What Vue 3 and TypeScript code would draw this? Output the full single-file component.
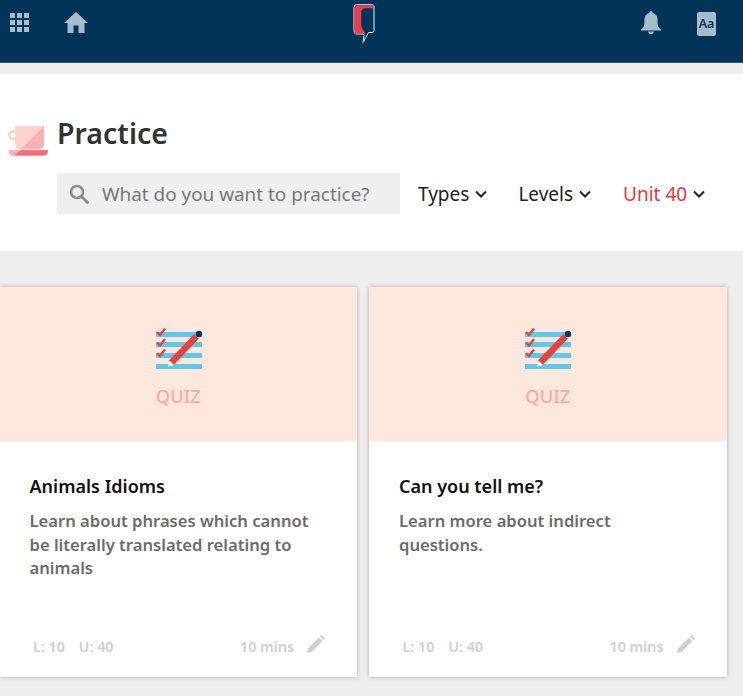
<script setup lang="ts">
interface Card {
  title: string;
  desc: string;
}

const cards: Card[] = [
  { title: 'Animals Idioms', desc: 'Learn about phrases which cannot be literally translated relating to animals' },
  { title: 'Can you tell me?', desc: 'Learn more about indirect questions.' },
];
const filters = ['Types', 'Levels', 'Unit 40'];
</script>

<template>
  <div class="page">
    <header class="topbar">
      <div class="left-icons">
        <svg class="grid-icon" width="20" height="20" viewBox="0 0 20 20">
          <g fill="#a9bbcb">
            <rect x="0" y="0" width="5" height="5" /><rect x="7" y="0" width="5" height="5" /><rect x="14" y="0" width="5" height="5" />
            <rect x="0" y="7" width="5" height="5" /><rect x="7" y="7" width="5" height="5" /><rect x="14" y="7" width="5" height="5" />
            <rect x="0" y="14" width="5" height="5" /><rect x="7" y="14" width="5" height="5" /><rect x="14" y="14" width="5" height="5" />
          </g>
        </svg>
        <svg class="home-icon" width="24" height="21" viewBox="0 0 24 21">
          <path d="M12 0 L24 11 H20.5 V21 H14.5 V13.5 H9.5 V21 H3.5 V11 H0 Z" fill="#a9bbcb" />
        </svg>
      </div>
      <svg class="logo" width="22" height="40" viewBox="0 0 22 40">
        <path d="M3.5 0.7 H19 Q21 0.7 21 2.7 V26.5 Q21 28.5 19 28.5 H15.5 L10 38.5 L11 31.5 Q11 30 9.5 30 H4 Q1 30 1 27 V3.5 Q1 0.7 3.5 0.7 Z" fill="#003459" stroke="#e8eef3" stroke-width="1" />
        <path d="M4 1.5 H20 V4.2 H12 Q8.2 4.6 8.2 9 V20 Q8.2 25 11 27 L12.5 29.4 H4.5 Q1.6 29.4 1.6 26.5 V4 Q1.6 1.5 4 1.5 Z" fill="#f23b4a" />
      </svg>
      <div class="right-icons">
        <svg width="20" height="23" viewBox="0 0 20 23">
          <path d="M10 0 Q11.7 0 11.8 2 Q16.6 3.3 16.6 9 V13 Q16.6 16 20 18.5 V19.5 H0 V18.5 Q3.4 16 3.4 13 V9 Q3.4 3.3 8.2 2 Q8.3 0 10 0 Z" fill="#a9bbcb" />
          <path d="M7 20.5 H13 Q12.5 23 10 23 Q7.5 23 7 20.5 Z" fill="#a9bbcb" />
        </svg>
        <div class="font-btn">Aa</div>
      </div>
    </header>

    <section class="head">
      <div class="title-row">
        <svg class="cup" width="40" height="30" viewBox="0 0 40 30">
          <path d="M7 0 H36 V17 Q36 23 30 23 H13 Q7 23 7 17 V14.5 H5.5 Q0 14.5 0 9.5 Q0 4 5.5 4 H7 Z M7 7 H5.5 Q3 7 3 9.5 Q3 11.5 5.5 11.5 H7 Z" fill="#ffd3d0" fill-rule="evenodd" />
          <path d="M36 0 V17 Q36 23 30 23 H13 Z" fill="#ffb0b5" />
          <path d="M0.5 24 H40 Q40 29.5 35 29.5 H5 Q0.5 29.5 0.5 24 Z" fill="#ffb0b5" />
          <path d="M6 29.5 L13 24 H40 Q40 29.5 35 29.5 Z" fill="#ff6b78" />
        </svg>
        <h1>Practice</h1>
      </div>
      <div class="tools">
        <div class="search">
          <svg width="20" height="20" viewBox="0 0 20 20">
            <circle cx="8" cy="8" r="6" fill="none" stroke="#8e8e8e" stroke-width="2.6" />
            <path d="M12.5 12.5 L18.5 18.5" stroke="#8e8e8e" stroke-width="3" stroke-linecap="round" />
          </svg>
          <span>What do you want to practice?</span>
        </div>
        <div class="filters">
          <div v-for="f in filters" :key="f" class="filter" :class="{ active: f === 'Unit 40' }">
            <span>{{ f }}</span>
            <svg width="12" height="8" viewBox="0 0 12 8">
              <path d="M1 1.5 L6 6.5 L11 1.5" fill="none" stroke="#222" stroke-width="2" />
            </svg>
          </div>
        </div>
      </div>
    </section>

    <main class="cards">
      <article v-for="c in cards" :key="c.title" class="card">
        <div class="banner">
          <svg class="quiz-icon" width="47" height="41" viewBox="0 0 47 41">
            <g fill="#5bc8ec">
              <rect x="0" y="4" width="46" height="5" />
              <rect x="0" y="14" width="46" height="5" />
              <rect x="0" y="25" width="46" height="5" />
              <rect x="0" y="36" width="46" height="5" />
            </g>
            <g fill="none" stroke="#e8413a" stroke-width="2.4">
              <path d="M1 4 L4 7 L9 0.5" />
              <path d="M1 14.5 L4 17.5 L9 11" />
              <path d="M1 25 L4 28 L9 21.5" />
            </g>
            <path d="M15 35 L40.5 8.5" stroke="#e8413a" stroke-width="6.5" />
            <path d="M12 38.5 L13.5 32.5 L18 37 Z" fill="#fff" />
            <circle cx="43" cy="6" r="3.2" fill="#12305f" />
          </svg>
          <div class="quiz">QUIZ</div>
        </div>
        <div class="body">
          <h2>{{ c.title }}</h2>
          <p>{{ c.desc }}</p>
          <div class="meta">
            <span class="lvl">L: 10</span>
            <span class="lvl">U: 40</span>
            <span class="mins">10 mins</span>
            <svg width="18" height="18" viewBox="0 0 18 18">
              <path d="M0 18 L1 13.5 L12 2.5 L15.5 6 L4.5 17 Z M13 1.5 L14.5 0 L18 3.5 L16.5 5 Z" fill="#cfcfcf" />
            </svg>
          </div>
        </div>
      </article>
    </main>
  </div>
</template>

<style>
html,
body {
  margin: 0;
  background: #eeeeee;
  overflow: hidden;
}
</style>

<style scoped>
.page {
  width: 743px;
  height: 696px;
  overflow: hidden;
  background: #eeeeee;
  font-family: "Noto Sans", "Open Sans", sans-serif;
}

.topbar {
  height: 62px;
  background: #003459;
  border-bottom: 1px solid #2f5778;
  display: flex;
  justify-content: space-between;
  align-items: flex-start;
  padding: 0 27px 0 10px;
  position: relative;
}

.left-icons {
  display: flex;
  align-items: flex-start;
  gap: 34px;
  padding-top: 13px;
}

.home-icon {
  margin-top: -1px;
}

.logo {
  position: absolute;
  left: 353px;
  top: 4px;
}

.right-icons {
  display: flex;
  align-items: flex-start;
  gap: 36px;
  padding-top: 11px;
}

.font-btn {
  width: 19px;
  height: 24px;
  background: #a9bbcb;
  border-radius: 2px;
  color: #003459;
  font-size: 12.5px;
  font-weight: 600;
  line-height: 24px;
  text-align: center;
  margin-top: 1px;
}

.head {
  margin-top: 11px;
  height: 177px;
  background: #fff;
  box-sizing: border-box;
  padding: 41px 0 0 8px;
}

.title-row {
  display: flex;
  align-items: flex-start;
  gap: 9px;
  height: 58px;
}

.cup {
  margin-top: 11px;
}

h1 {
  margin: -1px 0 0;
  font-size: 28.5px;
  font-weight: 600;
  line-height: 38px;
  color: #333;
}

.tools {
  display: flex;
  align-items: center;
  margin-left: 49px;
}

.search {
  width: 343px;
  height: 41px;
  background: #efefef;
  display: flex;
  align-items: center;
  gap: 13px;
  box-sizing: border-box;
  padding-left: 12px;
  font-size: 18.9px;
  color: #777;
}

.filters {
  display: flex;
  gap: 31px;
  margin-left: 18px;
}

.filter {
  display: flex;
  align-items: center;
  gap: 6px;
  font-size: 19px;
  color: #222;
}

.filter.active span {
  color: #e8383a;
  margin-left: 1px;
}

.cards {
  display: flex;
  gap: 12px;
  margin: 36px 0 0 -0.5px;
}

.card {
  width: 357.5px;
  height: 390px;
  flex-shrink: 0;
  background: #fff;
  box-shadow: 0 0 4px rgba(0, 0, 0, 0.3);
  display: flex;
  flex-direction: column;
}

.banner {
  height: 154px;
  background: #fee8de;
  display: flex;
  flex-direction: column;
  align-items: center;
  padding-top: 41px;
  box-sizing: border-box;
}

.quiz-icon {
  margin-left: 1.5px;
}

.quiz {
  margin-top: 15px;
  font-size: 18.4px;
  font-weight: 500;
  line-height: 24px;
  color: #ffa9a3;
}

.body {
  flex: 1;
  display: flex;
  flex-direction: column;
  padding: 33px 32px 20px 30px;
}

h2 {
  margin: 0 0 11px;
  font-size: 18px;
  font-weight: 600;
  line-height: 24px;
  color: #111;
}

p {
  margin: 0;
  font-size: 16.6px;
  font-weight: 600;
  line-height: 23.6px;
  color: #6b6b6b;
}

.meta {
  margin-top: auto;
  display: flex;
  align-items: center;
  padding-left: 3.5px;
  font-size: 14.3px;
  font-weight: 600;
  line-height: 20px;
  color: #cfcfcf;
  gap: 14px;
}

.meta svg {
  margin: -7px 0 0 -1px;
}

.mins {
  margin-left: auto;
}
</style>
